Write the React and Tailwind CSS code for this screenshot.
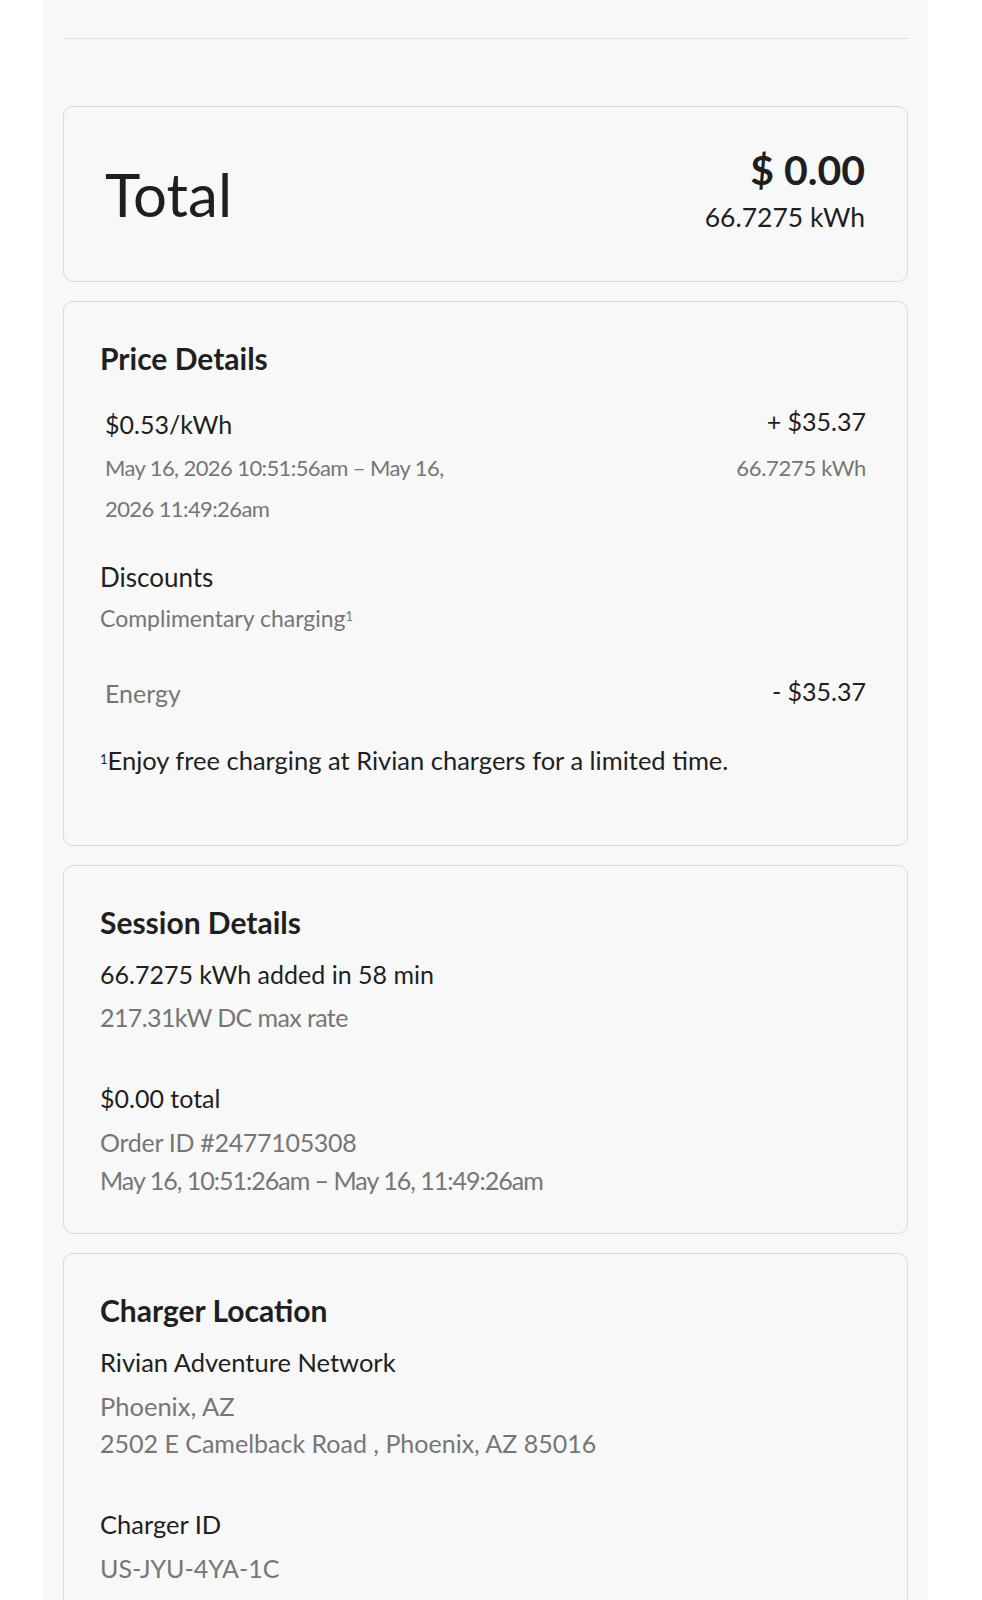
import React from 'react';

const FONT = { fontFamily: 'Lato, "Open Sans", Arial, sans-serif' };

function Card({ className = '', children }) {
  return (
    <div className={`rounded-[10px] border border-[#dadada] bg-[#f8f8f8] ${className}`}>
      {children}
    </div>
  );
}

function TotalCard() {
  return (
    <Card className="flex h-[176px] items-center justify-between pl-[41px] pr-[42px]">
      <span className="text-[60px] leading-none text-[#1f1f1f]">Total</span>
      <div className="flex flex-col items-end pb-[6px]">
        <span className="text-[41px] font-bold leading-[46px] text-[#1f1f1f]">$ 0.00</span>
        <span className="mt-[6px] text-[26.5px] leading-[36px] text-[#1f1f1f]">66.7275 kWh</span>
      </div>
    </Card>
  );
}

function PriceDetails() {
  return (
    <Card className="h-[545px] pl-[36px] pr-[41px] pt-[36px]">
      <h2 className="text-[30px] font-bold leading-[40px] text-[#1f1f1f]">Price Details</h2>

      <div className="mt-[30px] flex justify-between">
        <div className="w-[365px] pl-[5px]">
          <p className="text-[25px] leading-[32px] text-[#1f1f1f]">$0.53/kWh</p>
          <p className="mt-[7px] text-[22px] leading-[41px] tracking-[-0.6px] text-[#767676]">
            May 16, 2026 10:51:56am – May 16, 2026 11:49:26am
          </p>
        </div>
        <div className="flex flex-col items-end">
          <p className="-translate-y-[3px] text-[25px] leading-[32px] text-[#1f1f1f]">+ $35.37</p>
          <p className="mt-[7px] text-[22px] leading-[41px] tracking-[-0.3px] text-[#767676]">66.7275 kWh</p>
        </div>
      </div>

      <p className="mt-[32px] text-[26px] leading-[32px] text-[#1f1f1f]">Discounts</p>
      <p className="mt-[9px] text-[23px] leading-[32px] text-[#767676]">
        Complimentary charging<sup className="text-[13px]">1</sup>
      </p>

      <div className="mt-[43px] flex items-center justify-between">
        <span className="pl-[5px] text-[25px] leading-[32px] text-[#767676]">Energy</span>
        <span className="-translate-y-[2px] text-[25px] leading-[32px] text-[#1f1f1f]">- $35.37</span>
      </div>

      <p className="mt-[35px] text-[25.5px] leading-[32px] text-[#1f1f1f]">
        <sup className="text-[13px]">1</sup>Enjoy free charging at Rivian chargers for a limited time.
      </p>
    </Card>
  );
}

function SessionDetails() {
  return (
    <Card className="h-[369px] pl-[36px] pr-[41px] pt-[36px]">
      <h2 className="text-[30px] font-bold leading-[40px] text-[#1f1f1f]">Session Details</h2>
      <p className="mt-[16px] text-[25px] leading-[32px] text-[#1f1f1f]">66.7275 kWh added in 58 min</p>
      <p className="mt-[11px] text-[25px] leading-[32px] tracking-[-0.6px] text-[#767676]">217.31kW DC max rate</p>
      <p className="mt-[49px] text-[25px] leading-[32px] text-[#1f1f1f]">$0.00 total</p>
      <p className="mt-[12px] text-[25px] leading-[32px] tracking-[-0.3px] text-[#767676]">Order ID #2477105308</p>
      <p className="mt-[6px] text-[25px] leading-[32px] tracking-[-1px] text-[#767676]">
        May 16, 10:51:26am – May 16, 11:49:26am
      </p>
    </Card>
  );
}

function ChargerLocation() {
  return (
    <Card className="h-[400px] pl-[36px] pr-[41px] pt-[36px]">
      <h2 className="text-[30px] font-bold leading-[40px] text-[#1f1f1f]">Charger Location</h2>
      <p className="mt-[16px] text-[25.5px] leading-[32px] text-[#1f1f1f]">Rivian Adventure Network</p>
      <p className="mt-[12px] text-[25.5px] leading-[32px] text-[#767676]">Phoenix, AZ</p>
      <p className="mt-[5px] text-[25px] leading-[32px] text-[#767676]">
        2502 E Camelback Road , Phoenix, AZ 85016
      </p>
      <p className="mt-[49px] text-[25.5px] leading-[32px] text-[#1f1f1f]">Charger ID</p>
      <p className="mt-[12px] text-[25px] leading-[32px] text-[#767676]">US-JYU-4YA-1C</p>
    </Card>
  );
}

export default function App() {
  return (
    <div className="min-h-[1600px] bg-white" style={FONT}>
      <div className="ml-[43px] w-[885px] bg-[#f8f8f8] px-[20px] pt-[38px]">
        <div className="border-t border-[#dddddd]" />
        <div className="flex flex-col gap-[19px] pt-[67px] pb-[40px]">
          <TotalCard />
          <PriceDetails />
          <SessionDetails />
          <ChargerLocation />
        </div>
      </div>
    </div>
  );
}
